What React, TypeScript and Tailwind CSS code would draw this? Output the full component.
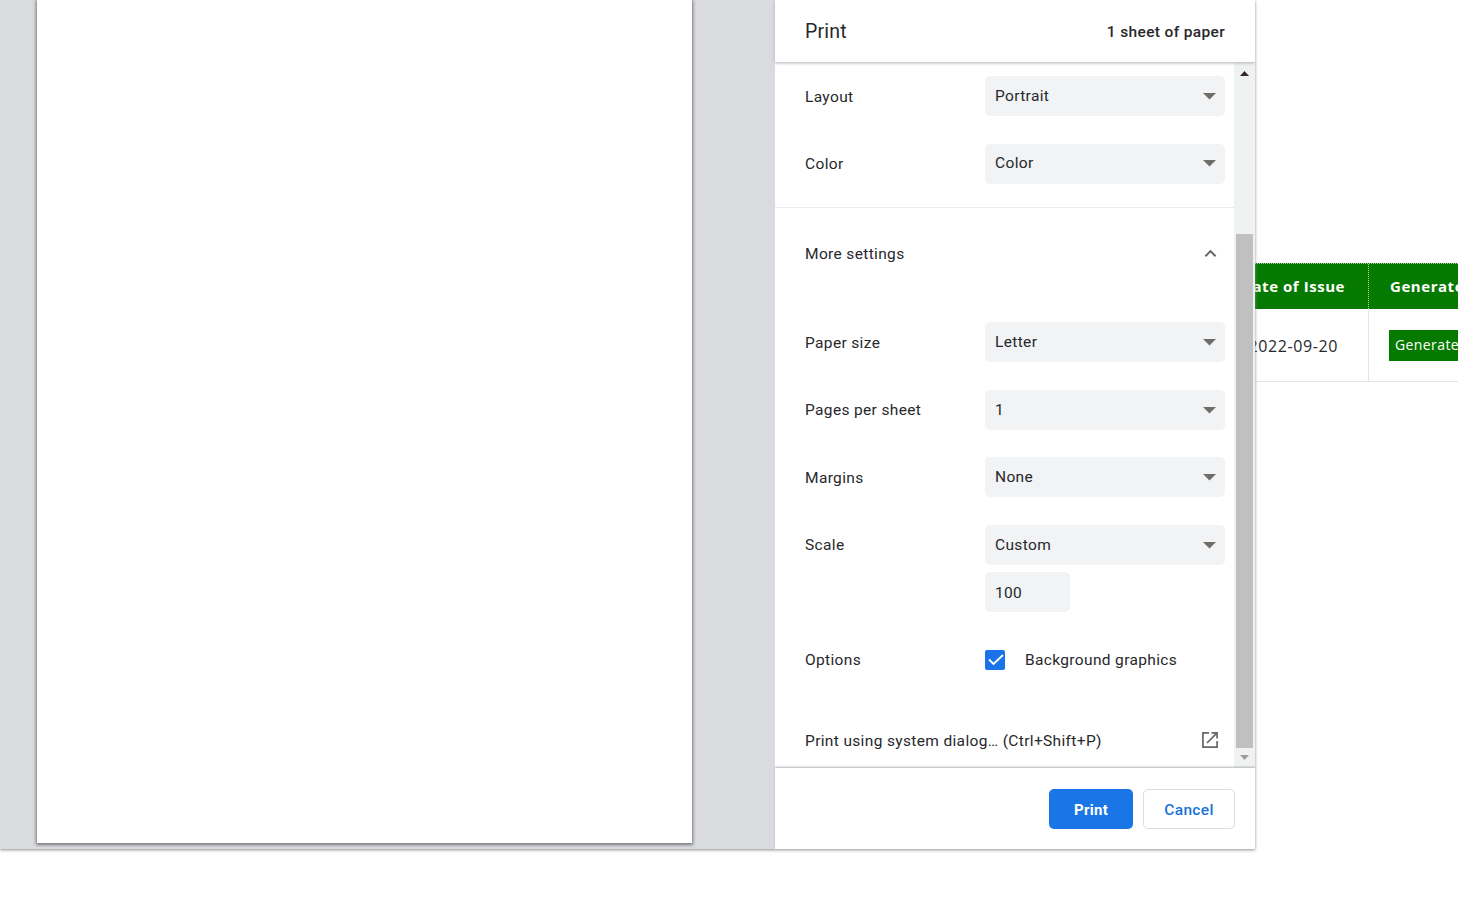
type SelectRowProps = {
  label: string;
  value: string;
  height?: string;
  labelClass?: string;
  valueClass?: string;
};

function SelectRow({ label, value, height = "h-[68px]", labelClass = "", valueClass = "" }: SelectRowProps) {
  return (
    <div className={`flex items-center pl-[30px] pr-[9px] ${height}`}>
      <span className={`w-[180px] ${labelClass}`}>{label}</span>
      <div className="flex h-10 w-60 items-center justify-between rounded-[5px] bg-[#f1f3f4] pl-2.5 pr-[9px]">
        <span className={valueClass}>{value}</span>
        <svg className={valueClass} width="13" height="7" viewBox="0 0 13 7" fill="#706d66">
          <path d="M0 0h13L6.5 6.5z" />
        </svg>
      </div>
    </div>
  );
}

function Preview() {
  return (
    <div className="flex w-[775px] bg-[#dadbdf] pl-[37px]">
      <div className="h-[843px] w-[655px] bg-white shadow-[0_1px_3px_1px_#77797d]" />
    </div>
  );
}

function Scrollbar() {
  return (
    <div className="flex w-[21px] flex-col items-center bg-[#f0f2f2]">
      <svg className="mt-[9px] mb-[158px] shrink-0" width="9" height="5" viewBox="0 0 9 5" fill="#33272b">
        <path d="M0 5h9L4.5 0z" />
      </svg>
      <div className="h-[514px] w-[17px] shrink-0 bg-[#c0c0c0]" />
      <svg className="mt-[7px]" width="9" height="5" viewBox="0 0 9 5" fill="#9c9c9c">
        <path d="M0 0h9L4.5 5z" />
      </svg>
    </div>
  );
}

function PrintSettings() {
  return (
    <div className="flex w-[480px] flex-col bg-white">
      {/* Header */}
      <header className="z-10 flex h-[62px] items-center justify-between bg-white pl-[30px] pr-[30px] shadow-[0_1px_3px_#aeb3b6]">
        <h1 className="pt-0.5 text-[19.5px] tracking-[0.2px]">Print</h1>
        <span className="pt-0.5 text-[15.5px] font-medium tracking-[0.35px]">1 sheet of paper</span>
      </header>

      {/* Settings */}
      <div className="flex h-[706px]">
        <div className="w-[459px]">
          <SelectRow label="Layout" value="Portrait" labelClass="pt-0.5" />
          <SelectRow label="Color" value="Color" valueClass="mb-0.5" />

          <div className="mt-[9px] flex h-[93px] items-center justify-between border-t border-[#e8eaed] pl-[30px] pr-[17px]">
            <span>More settings</span>
            <svg className="mb-0.5" width="13" height="9" viewBox="0 0 14 9" fill="none" stroke="#666" strokeWidth="2.1">
              <path d="M1.5 7.5 7 2l5.5 5.5" />
            </svg>
          </div>

          <div className="pt-2">
            <SelectRow label="Paper size" value="Letter" labelClass="pt-0.5" />
            <SelectRow label="Pages per sheet" value="1" />
            <SelectRow label="Margins" value="None" height="h-[66px]" labelClass="pt-0.5" />
            <SelectRow label="Scale" value="Custom" height="h-[70px]" />
          </div>
          <div className="-mt-2 ml-[210px] flex h-10 w-[85px] items-center rounded-[5px] bg-[#f1f3f4] px-2.5 pt-0.5">
            100
          </div>

          <div className="mt-7 flex h-10 items-center pl-[30px]">
            <span className="w-[180px]">Options</span>
            <svg className="mr-5" width="20" height="20" viewBox="0 0 20 20">
              <rect width="20" height="20" rx="2" fill="#1a73e8" />
              <path d="m4 9.5 4.5 4.5L18 5" fill="none" stroke="white" strokeWidth="1.9" />
            </svg>
            <span>Background graphics</span>
          </div>

          <div className="mt-[41px] flex h-10 items-center justify-between pl-[30px] pr-4">
            <span>Print using system dialog… (Ctrl+Shift+P)</span>
            <svg className="mb-0.5" width="16" height="16" viewBox="0 0 16 16" fill="none" stroke="#6b6863" strokeWidth="1.7">
              <path d="M7 .9H.9v14.2h14.2V9M9.5.9h5.6v5.6M14.8 1.2 5 11" />
            </svg>
          </div>
        </div>
        <Scrollbar />
      </div>

      {/* Footer */}
      <footer className="z-10 flex h-[81px] items-center justify-end gap-2.5 bg-white pr-5 font-medium shadow-[0_-1px_2px_#aeb3b6]">
        <button className="h-10 w-[84px] rounded-[5px] bg-[#1a75e6] pt-0.5 text-[15px] font-bold tracking-[0.3px] text-white">
          Print
        </button>
        <button className="h-10 w-[92px] rounded-[5px] border border-[#dadce0] pt-0.5 text-[15.5px] tracking-[0.35px] text-[#1a73d8]">
          Cancel
        </button>
      </footer>
    </div>
  );
}

function IssueTable() {
  return (
    <div className="mt-[263px] -ml-[11px] h-[119px] w-[214px] overflow-hidden font-['Open_Sans',sans-serif] whitespace-nowrap text-[#27282c]">
      <div className="flex h-[46px] border-t border-dotted border-[#a9cfa9] bg-[#067a00] text-[15px] font-bold tracking-[0.55px] text-white">
        <div className="flex w-[125px] shrink-0 items-center justify-end border-r border-dotted border-[#b6d6b4] pr-[23px]">
          <span>Date of Issue</span>
        </div>
        <div className="flex items-center pl-[21px]">Generate</div>
      </div>
      <div className="flex h-[73px] border-b border-[#e4e4e4]">
        <div className="flex w-[125px] shrink-0 items-center justify-end border-r border-[#e4e4e4] pt-px pr-[30px] text-base tracking-[0.6px]">
          <span>2022-09-20</span>
        </div>
        <div className="flex items-center pl-5">
          <button className="h-[31px] bg-[#067a00] px-1.5 text-sm tracking-[0.4px] text-white">Generate</button>
        </div>
      </div>
    </div>
  );
}

export default function App() {
  return (
    <div className="flex h-[910px] w-[1458px] items-start overflow-hidden bg-white">
      <div className="z-10 flex h-[849px] w-[1255px] shrink-0 overflow-clip font-[Roboto,sans-serif] text-[15.5px] leading-5 tracking-[0.35px] text-[#27282c] shadow-[0_1px_3px_#8c8f91]">
        <Preview />
        <PrintSettings />
      </div>
      <IssueTable />
    </div>
  );
}
